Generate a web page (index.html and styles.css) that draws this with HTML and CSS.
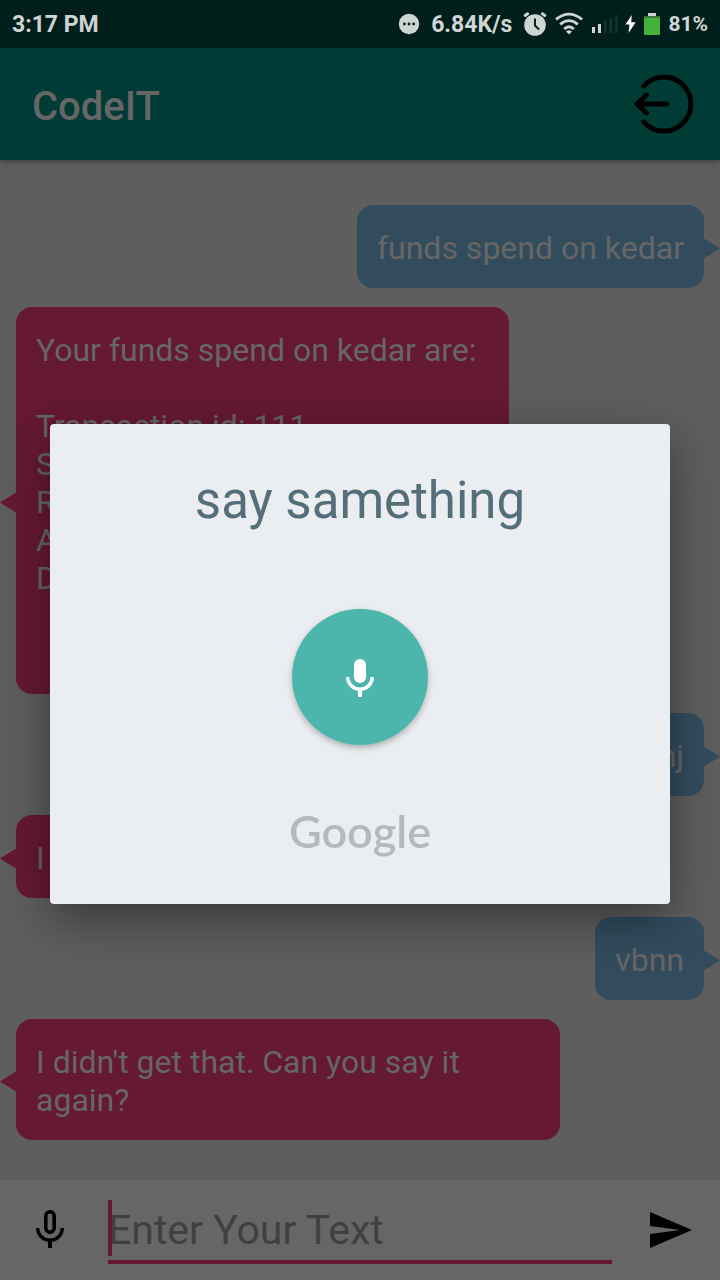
FILE: index.html
```html
<!DOCTYPE html>
<html lang="en">
<head>
<meta charset="utf-8">
<meta name="viewport" content="width=device-width, initial-scale=1">
<title>CodeIT</title>
<link rel="stylesheet" href="styles.css">
</head>
<body>
<div class="app">
  <div class="status-bar">
    <span class="status-time">3:17 PM</span>
    <svg class="ic-dots" width="22" height="22" viewBox="0 0 22 22"><circle cx="11" cy="11" r="10.2" fill="#cfd5d4"/><g fill="#001f1b"><circle cx="6.4" cy="11" r="1.4"/><circle cx="11" cy="11" r="1.4"/><circle cx="15.6" cy="11" r="1.4"/></g></svg>
    <span class="status-speed">6.84K/s</span>
    <svg class="ic-alarm" width="24" height="24" viewBox="0 0 24 24"><circle cx="12" cy="13" r="10.8" fill="#cfd5d4"/><path d="M2.2 3.4 4.6 1.8M21.8 3.4 19.4 1.8" stroke="#cfd5d4" stroke-width="3" stroke-linecap="round"/><path d="M12 6.5V13.5L16.2 17.6" fill="none" stroke="#001f1b" stroke-width="2"/></svg>
    <svg class="ic-wifi" width="28" height="24" viewBox="0 0 28 24"><g fill="none" stroke="#cfd5d4" stroke-width="2.8"><path d="M1 7.4Q14-3.2 27 7.4"/><path d="M5.2 12.4Q14 4.8 22.8 12.4"/><path d="M9.2 17Q14 12.6 18.8 17"/></g><path d="M11 19.4Q14 17.2 17 19.4L14 22.6Z" fill="#cfd5d4"/></svg>
    <svg class="ic-signal" width="28" height="20" viewBox="0 0 28 20"><path d="M1 13h3v6H1zM7 10h3v9H7z" fill="#cfd5d4"/><path d="M13 7h2.6v12H13zM18.6 4h2.6v15h-2.6zM24.2 1h2.6v18h-2.6z" fill="#17332f"/></svg>
    <svg class="ic-bolt" width="11" height="18" viewBox="0 0 11 18"><path d="M6.8 0 .4 9.6h4L3.6 18 10.6 7.2H6.2Z" fill="#fff"/></svg>
    <svg class="ic-battery" width="16" height="22" viewBox="0 0 16 22"><path d="M4 0h8v3H4z" fill="#cfd5d4"/><path d="M0 3h16v4H0z" fill="#3f7a3c"/><path d="M0 5h16v17H0z" fill="#45b13d"/></svg>
    <span class="status-percent">81%</span>
  </div>

  <header class="toolbar">
    <h1 class="toolbar-title">CodeIT</h1>
    <button class="icon-button logout" type="button" aria-label="Log out">
      <svg width="60" height="60" viewBox="0 0 60 60" fill="none" stroke="#000" stroke-width="4.8" stroke-linecap="round" stroke-linejoin="round"><path d="M9.6 12.2A27 27 0 1 1 9.6 47.8"/><path d="M33 30H3M12.5 21 3 30l9.5 9"/></svg>
    </button>
  </header>

  <main class="chat">
    <div class="bubble sent">funds spend on kedar</div>
    <div class="bubble received details">Your funds spend on kedar are:<br><br>Transaction id: 111<br>S<br>R<br>A<br>D<br><br><br></div>
    <div class="bubble sent">nj</div>
    <div class="bubble received">I</div>
    <div class="bubble sent">vbnn</div>
    <div class="bubble received">I didn't get that. Can you say it again?</div>
  </main>

  <form class="composer">
    <button class="icon-button" type="button" aria-label="Voice input">
      <svg width="28" height="38" viewBox="0 0 28 38" fill="none" stroke="#000"><rect x="9.8" y="1.8" width="8.4" height="20.4" rx="4.2" stroke-width="3.6"/><path d="M1.7 18A12.3 12.3 0 0 0 26.3 18" stroke-width="3.4"/><path d="M14 30V38" stroke-width="4"/></svg>
    </button>
    <div class="field">
      <input class="field-input" type="text" placeholder="Enter Your Text" aria-label="Enter Your Text">
      <span class="caret"></span>
    </div>
    <button class="icon-button send" type="button" aria-label="Send">
      <svg width="42" height="36" viewBox="0 0 42 36"><path d="M0 0 42 18 0 36V22L30 18 0 14Z" fill="#000"/></svg>
    </button>
  </form>
</div>

<div class="overlay">
  <section class="dialog" role="dialog" aria-labelledby="prompt">
    <h2 class="dialog-title" id="prompt">say samething</h2>
    <button class="mic" type="button" aria-label="Listen">
      <svg width="28" height="38" viewBox="0 0 28 38"><rect x="8" y="0" width="12" height="24" rx="6" fill="#fff"/><path d="M1.7 18A12.3 12.3 0 0 0 26.3 18" fill="none" stroke="#fff" stroke-width="3.4"/><path d="M12 30h4v8h-4z" fill="#fff"/></svg>
    </button>
    <div class="brand">Google</div>
  </section>
</div>
</body>
</html>
```
FILE: styles.css
```css
* { box-sizing: border-box; }

body {
  margin: 0;
  background: #5e5e5e;
  font-family: Roboto, "Liberation Sans", sans-serif;
}

h1, h2 { margin: 0; }
svg { display: block; flex: none; }

.app {
  display: flex;
  flex-direction: column;
  min-height: 100vh;
}

.status-bar {
  display: flex;
  align-items: center;
  height: 48px;
  padding: 0 12px;
  background: #001f1b;
  color: #cfd5d4;
  font-size: 23px;
  font-weight: 700;
  white-space: nowrap;
}
.status-time { margin-right: auto; }
.status-speed { margin: 0 11px; }
.ic-wifi { margin-left: 8px; }
.ic-signal { margin-left: 8px; }
.ic-bolt { margin: 0 8px 0 6px; }
.status-percent { margin-left: 8px; font-size: 21px; }

.toolbar {
  display: flex;
  align-items: center;
  justify-content: space-between;
  height: 112px;
  padding: 4px 26px 0 32px;
  background: #003b35;
  box-shadow: 0 1px 6px rgba(0, 0, 0, 0.4);
}
.toolbar-title {
  color: #666;
  font-size: 40px;
  font-weight: 500;
}

.icon-button {
  display: flex;
  align-items: center;
  justify-content: center;
  padding: 0;
  border: 0;
  background: none;
}
.logout { margin-bottom: 4px; }

.chat {
  display: flex;
  flex: 1;
  flex-direction: column;
  gap: 19px;
  padding: 45px 16px 40px;
}

.bubble {
  position: relative;
  max-width: 544px;
  padding: 24px 20px 21px;
  border-radius: 16px;
  color: #666;
  font-size: 32px;
  line-height: 38px;
}
.bubble::after {
  position: absolute;
  top: calc(50% - 8px);
  width: 16px;
  height: 20px;
  background: inherit;
  content: "";
}
.sent { align-self: flex-end; background: #324c5e; }
.sent::after { left: 100%; clip-path: polygon(0 0, 100% 50%, 0 100%); }
.received { align-self: flex-start; background: #651932; }
.received::after { right: 100%; clip-path: polygon(100% 0, 0 50%, 100% 100%); }
.details { padding-right: 32px; }

.composer {
  display: grid;
  grid-template-columns: 100px 1fr 100px;
  gap: 8px;
  height: 100px;
  background: #666;
}
.composer .icon-button { padding-bottom: 2px; }
.composer .send { padding: 0 0 0 2px; }
.field {
  position: relative;
  margin: 16px 0;
  border-bottom: 4px solid #651932;
}
.field-input {
  width: 100%;
  height: 100%;
  padding: 4px 0 0;
  border: 0;
  outline: 0;
  background: none;
  color: #000;
  font: 41px Roboto, "Liberation Sans", sans-serif;
}
.field-input::placeholder { color: #404040; opacity: 1; }
.caret {
  position: absolute;
  top: 4px;
  bottom: 4px;
  left: 0;
  width: 4px;
  background: #651932;
}

.overlay {
  position: fixed;
  inset: 48px 0 0;
  display: flex;
  align-items: center;
  padding: 0 50px;
}
.dialog {
  display: flex;
  flex: 1;
  flex-direction: column;
  align-items: center;
  padding: 45px 24px 42px;
  border-radius: 4px;
  background: #eaeef1;
  box-shadow: 0 16px 48px rgba(0, 0, 0, 0.4);
}
.dialog-title {
  color: #546e7a;
  font-size: 51px;
  font-weight: 400;
  line-height: 64px;
}
.mic {
  display: flex;
  align-items: center;
  justify-content: center;
  width: 136px;
  height: 136px;
  margin: 76px 0 56px;
  padding: 2px 0 0;
  border: 0;
  border-radius: 50%;
  background: #4db6ac;
  box-shadow: 0 3px 6px rgba(0, 0, 0, 0.25);
}
.brand {
  color: #b4b9bc;
  font-family: Lato, sans-serif;
  font-size: 45px;
  font-weight: 600;
  line-height: 61px;
}
```
